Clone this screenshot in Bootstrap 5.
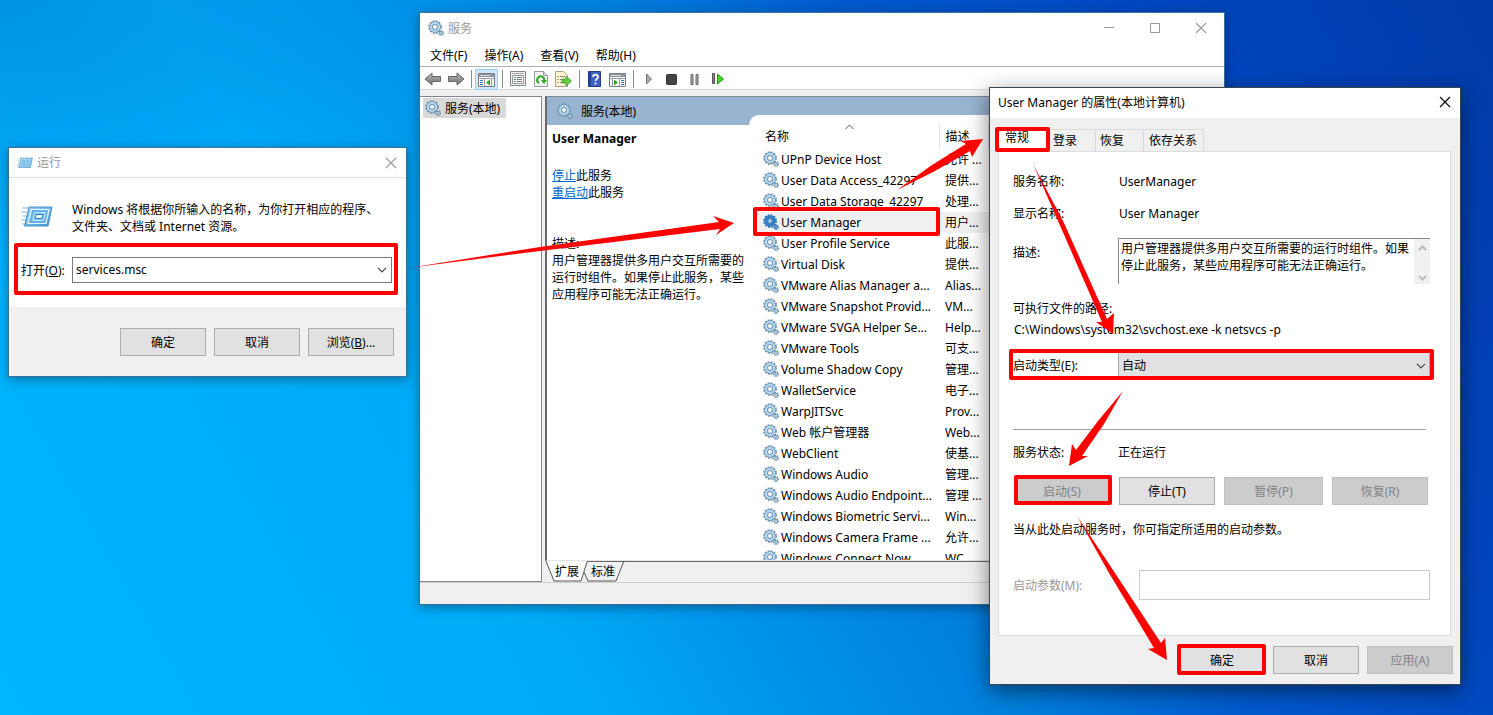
<!DOCTYPE html>
<html lang="zh-CN">
<head>
<meta charset="utf-8">
<meta name="viewport" content="width=device-width, initial-scale=1">
<title>服务</title>
<link href="https://cdn.jsdelivr.net/npm/bootstrap@5.3.0/dist/css/bootstrap.min.css" rel="stylesheet">
<style>
body{font-family:"Noto Sans","Noto Sans CJK SC",sans-serif;font-size:12px;line-height:17px;color:#000}
button,input,select,textarea{font:inherit;color:inherit;border-radius:0}
.desktop{min-height:100vh;background:
  radial-gradient(ellipse 420px 260px at 0 0,rgba(0,125,215,.55) 0,rgba(0,125,215,0) 100%),
  linear-gradient(60deg,#00b6ff 0,#00acf8 30%,#0092e8 43%,#007edb 54%,#0058cc 66%,#0046be 82%,#003aa8 100%)}
.win{position:absolute;border:1px solid #3a6f96;background:#fff;box-shadow:0 3px 10px rgba(0,0,0,.35)}
.win-run{left:8px;top:147px;width:399px}
.win-svc{left:419px;top:12px;width:806px;height:593px;background:#f0f0f0}
.win-prop{left:989px;top:87px;width:472px;border-color:#3c4650;background:#f0f0f0;box-shadow:0 6px 20px rgba(0,0,0,.5)}
.titlebar{height:30px;background:#fff}
.win-prop .titlebar{padding-bottom:2px}
.cap{border:0;background:none;padding:0;width:30px;height:28px;line-height:0}
.cap-wide{width:46px}
.inactive{color:#999}
.wbtn{width:86px;height:28px;padding:0;border:1px solid #adadad;background:#e1e1e1;white-space:nowrap}
.wbtn:disabled{background:#ccc;border-color:#bfbfbf;color:#838383}
.run-intro{padding:23px 12px 0 12px;gap:19px}
.run-open{padding:22px 14px 24px 12px}
.run-open label{width:51px}
.run-field{height:26px;border:1px solid #7a7a7a}
.run-field input{border:0;outline:0;min-width:0;padding:0 0 2px 3px}
.run-field button{border:0;background:none;width:18px;padding:0;line-height:0;color:#444}
.run-foot{background:#f0f0f0;height:69px;padding:21px 12px 0;gap:8px}
.menus{height:23px;background:#fff;padding:2px 0 0 2px;gap:1px}
.menus button{border:0;background:none;padding:0 8px}
.tools{height:24px;border-top:1px solid #b0b0b0;border-bottom:1px solid #d9d9d9;background:#fff;padding:2px 0 0 1px}
.tools button{width:23px;height:21px;border:0;padding:0;background:none;line-height:0}
.tools button.on{background:#cce8ff;border:1px solid #99d1ff}
.vsep{width:1px;height:18px;margin:0 3px 0 4px;background:#8c8c8c}
.workarea{padding-top:6px;gap:3px;min-height:0}
.tree{width:122px;border:1px solid #828790;border-left:0;background:#fff}
.tree-node{background:#d9d9d9;height:20px;width:83px;margin:1px 0 0 3px;padding-left:2px;gap:4px}
.pane{border-left:2px solid #696969;border-top:1px solid #828790;border-bottom:1px solid #e3e3e3;background:#fff;min-height:0}
.detail{width:202px}
.band{background:#99b4d1;height:28px;padding-left:10px;gap:8px}
.detail-body{padding:5px 4px 0 5px}
.detail-body h1{font-size:12px;line-height:17px;font-weight:700;margin:0}
.detail-body p{margin:20px 0 0}
.detail-body p+p{margin-top:34px}
.detail-body a{color:#0066cc}
.listwrap{background:#99b4d1;padding-top:18px;min-height:0}
.listbox{background:#fff;border-top-left-radius:10px;padding:8px 0 0 6px;overflow:hidden}
.svc{width:100%;table-layout:fixed;border-collapse:collapse}
.svc th{height:26px;font-weight:400;padding:0 6px 0 10px;border-right:1px solid #e5e5e5;position:relative}
.svc th+th{padding-left:6px}
.svc td{height:21px;padding:0 0 0 6px;white-space:nowrap;overflow:hidden}
.svc td:first-child{padding-left:8px}
.svc tr.sel td{background:#f0f0f0}
.svc .gear{margin-right:2px;vertical-align:-3px}
.sort{position:absolute;left:90px;top:1px}
.c-name{width:184px}.c-desc{width:49px}
.sheets{height:21px;position:relative;padding-left:4px}
.sheets svg{position:absolute;left:0;top:0}
.sheets .rule{height:1px;background:#696969;position:absolute;left:41px;right:0;top:0}
.sheets button{position:relative;border:0;background:none;padding:0;width:36px}
.statusbar{height:22px;border-top:1px solid #d0d0d0}
.ptabs{padding:9px 0 0 6px}
.ptabs button{border:1px solid #d9d9d9;border-bottom:0;background:#f0f0f0;width:48px;height:22px;padding:0 8px 0 4px;text-align:left}
.ptabs button+button+button{border-left:0}
.ptabs button.active{width:52px;height:24px;background:#fff;padding:0 0 4px 8px}
.ptabs button.wide{width:60px;padding:0 5px}
.sheet{margin:0 9px 10px 8px;border:1px solid #dcdcdc;background:#fff;padding:13px 20px 35px 14px}
.frow{height:32px}
.flabel{width:105px;flex:none}
.frow .flabel{width:106px}
.descrow{margin:9px 0 16px}
.descrow .flabel{padding-top:6px}
.descbox{height:46px;border:1px solid #828790;border-right:0;border-bottom:0}
.descbox textarea{border:0;resize:none;padding:1px 0 0 2px;overflow:hidden;outline:0;height:44px;min-width:0}
.fakebar{width:16px;background:#f0f0f0;padding:6px 0 3px}
.exepath{margin:4px 0 14px 1px}
.startup{height:27px;border:1px solid #adadad;background:#e1e1e1;appearance:none;padding:0 3px;width:100%}
.startup-wrap{position:relative;color:#444}
.startup-wrap select{color:#000}
.startup-wrap svg{position:absolute;right:4px;top:11px;pointer-events:none}
.divider{height:1px;background:#a0a0a0;margin:50px 4px 14px 0}
.acts{display:grid;grid-template-columns:96px 96px 99px 96px;gap:9px;margin:16px 0 16px 1px}
.acts .wbtn{width:auto}
.paramrow{margin-top:32px}
.param{width:291px;height:30px;border:1px solid #ccc;background:#fff}
.prop-foot{gap:8px;padding:0 7px 10px 0}
.marks{position:absolute;left:0;top:0;pointer-events:none}
</style>
</head>
<body>
<svg width="0" height="0" class="position-absolute" aria-hidden="true">
  <defs>
    <symbol id="gear" viewBox="0 0 16 16">
      <circle cx="7" cy="7" r="5.9" fill="none" stroke="#7391ab" stroke-width="2" stroke-dasharray="1.8 1.29"/>
      <circle cx="7" cy="7" r="4.1" fill="none" stroke="#7f9fb9" stroke-width="3.6"/>
      <circle cx="7" cy="7" r="4" fill="none" stroke="#b3d8ee" stroke-width="2.2"/>
      <circle cx="7" cy="7" r="2.4" fill="#fff" stroke="#6288a8" stroke-width=".8"/>
      <circle cx="13" cy="13" r="2.3" fill="none" stroke="#66889f" stroke-width="1.5" stroke-dasharray="1 .8"/>
      <circle cx="13" cy="13" r="1.4" fill="#e8f4fb" stroke="#7ba2be" stroke-width="1.1"/>
    </symbol>
    <symbol id="gearsel" viewBox="0 0 16 16">
      <circle cx="7" cy="7" r="5.9" fill="none" stroke="#2a6fae" stroke-width="2" stroke-dasharray="1.8 1.29"/>
      <circle cx="7" cy="7" r="4.1" fill="none" stroke="#2f7fc4" stroke-width="3.4"/>
      <circle cx="7" cy="7" r="2.2" fill="#b5d6f0" stroke="#1c5f9c" stroke-width=".7"/>
      <circle cx="13" cy="13" r="2" fill="#5a9fd6" stroke="#1c69b0" stroke-width="1.6" stroke-dasharray="1 .6"/>
    </symbol>
    <linearGradient id="rb" x1="0" y1="0" x2="1" y2="1"><stop offset="0" stop-color="#a5d6f5"/><stop offset="1" stop-color="#3b93d8"/></linearGradient>
    <symbol id="runicon" viewBox="0 0 32 24">
      <path d="M1 3h7M0 7h6M2 11h4M0 15h5M1 19h4" stroke="#a9d0ec" stroke-width="1.3"/>
      <path d="M8 2h23l-4 19H3.500z" fill="url(#rb)" stroke="#4a90c8"/>
      <path d="M10.500 4.500h17.500l-3 14H7z" fill="#62b2e8" stroke="#e4f4fe" stroke-width="1.2"/>
      <path d="M13.500 7.500h11l-1.800 8H11.500z" fill="#8ccdf4" stroke="#b8def5"/>
      <path d="M15 9.500h7l-.9 4h-7z" fill="#e8f6ff" stroke="#2d78ba"/>
    </symbol>
    <symbol id="x" viewBox="0 0 12 12"><path d="M1 1l10 10M11 1L1 11" stroke="currentColor" stroke-width="1.100" fill="none"/></symbol>
    <symbol id="down" viewBox="0 0 10 6"><path d="M1 .8l4 4 4-4" stroke="currentColor" stroke-width="1.200" fill="none"/></symbol>
    <linearGradient id="gr" x1="0" y1="0" x2="0" y2="1"><stop offset="0" stop-color="#bbb"/><stop offset="1" stop-color="#6e6e6e"/></linearGradient>
  </defs>
</svg>

<main class="desktop position-relative overflow-hidden">

  <section class="win win-svc d-flex flex-column" aria-label="服务">
    <header class="titlebar d-flex align-items-center flex-shrink-0 ps-2 inactive">
      <svg width="16" height="16" class="me-1"><use href="#gear"/></svg><span class="flex-grow-1">服务</span>
      <button class="cap cap-wide" aria-label="最小化"><svg width="10" height="10"><path d="M0 4.500h10" stroke="#999"/></svg></button>
      <button class="cap cap-wide" aria-label="最大化"><svg width="10" height="10"><path d="M.5.500h9v9h-9z" fill="none" stroke="#999"/></svg></button>
      <button class="cap cap-wide inactive" aria-label="关闭"><svg width="12" height="12"><use href="#x"/></svg></button>
    </header>
    <nav class="menus d-flex align-items-center flex-shrink-0">
      <button>文件(F)</button><button>操作(A)</button><button>查看(V)</button><button>帮助(H)</button>
    </nav>
    <div class="tools d-flex align-items-center flex-shrink-0" role="toolbar">
      <button aria-label="后退"><svg width="18" height="16"><path d="M1 8l7-6v3.500h8.500v5H8V14z" fill="url(#gr)" stroke="#666"/></svg></button>
      <button aria-label="前进"><svg width="18" height="16"><path d="M17 8l-7-6v3.500H1.500v5H10V14z" fill="url(#gr)" stroke="#666"/></svg></button>
      <i class="vsep"></i>
      <button class="on" aria-label="显示/隐藏控制台树"><svg width="17" height="15"><path d="M.5 1.500h16v13H.5z" fill="#fff" stroke="#7c8088"/><path d="M1 2h15v3H1z" fill="#8d929c"/><path d="M2 3.500h10" stroke="#d6d9df"/><path d="M1 6.500h15M6.500 6v8M13.500 6v8" stroke="#9aa0aa"/><path d="M2 8.500h3M2 10.500h3M2 12.500h3" stroke="#3c78b4"/><path d="M12 7.500v6L8 10.500z" fill="#2eaa1e"/></svg></button>
      <i class="vsep"></i>
      <button aria-label="属性"><svg width="16" height="16"><path d="M.5.500h15v14H.5z" fill="#eee" stroke="#85888c"/><path d="M2 2.500h12" stroke="#aaa"/><path d="M2.500 4.500h11v8h-11z" fill="#fff" stroke="#999"/><path d="M4 6.500h2M4 8.500h2M4 10.500h2" stroke="#4489bd"/><path d="M7 6.500h5M7 8.500h5M7 10.500h5" stroke="#777"/></svg></button>
      <button aria-label="刷新"><svg width="14" height="16"><path d="M.5.500h9l4 4v11H.5z" fill="#f5f5f5" stroke="#999"/><path d="M9.500.500v4h4" fill="#ddd" stroke="#999"/><path d="M5 12a3.500 3.500 0 1 1 5-2" fill="none" stroke="#2dac22" stroke-width="2"/><path d="M7 9h6l-3 4z" fill="#2dac22"/></svg></button>
      <button aria-label="导出列表"><svg width="17" height="16"><path d="M.5.500h8l4 4v11H.5z" fill="#fff4cf" stroke="#a9a286"/><path d="M2.500 5.500h1M2.500 8.500h1M2.500 11.500h1" stroke="#444"/><path d="M5 5.500h5M5 8.500h3M5 11.500h3" stroke="#888"/><path d="M7 8h4V5l5.500 5L11 15v-3H7z" fill="#62ca42" stroke="#389c25" stroke-width=".7"/></svg></button>
      <i class="vsep"></i>
      <button aria-label="帮助"><svg width="13" height="16"><path d="M.5.500h12v15H.5z" fill="#3f63c5" stroke="#243c8b"/><path d="M1 1h2v14H1z" fill="#253f99"/><path d="M5 6c0-3 5-3 5-.3 0 2-2.500 2.300-2.500 4.300M7.500 11.500v2" stroke="#fff" stroke-width="1.700" fill="none"/></svg></button>
      <button aria-label="显示/隐藏操作窗格"><svg width="17" height="15"><path d="M.5 1.500h16v13H.5z" fill="#fff" stroke="#7c8088"/><path d="M1 2h15v3H1z" fill="#8d929c"/><path d="M2 3.500h10" stroke="#d6d9df"/><path d="M1 6.500h15M3.500 6v8M10.500 6v8" stroke="#9aa0aa"/><path d="M12 8.500h3M12 10.500h3M12 12.500h3" stroke="#3c78b4"/><path d="M5 7.500v6l4-3z" fill="#2eaa1e"/></svg></button>
      <i class="vsep"></i>
      <button aria-label="启动服务"><svg width="8" height="12"><path d="M1.500 1v10l5-5z" fill="#aaa" stroke="#777"/></svg></button>
      <button aria-label="停止服务"><svg width="11" height="11"><rect x=".5" y=".5" width="10" height="10" rx="1" fill="#444" stroke="#333"/></svg></button>
      <button aria-label="暂停服务"><svg width="9" height="11"><path d="M1 .5h2v10H1zM6 .5h2v10H6z" fill="#aaa" stroke="#666"/></svg></button>
      <button aria-label="重启动服务"><svg width="12" height="12"><path d="M.5.500h2v10h-2z" fill="#888" stroke="#555"/><path d="M5.500 1v10l6-5z" fill="#46d32c" stroke="#219c17"/></svg></button>
    </div>
    <div class="workarea d-flex flex-grow-1">
      <aside class="tree flex-shrink-0">
        <div class="tree-node d-flex align-items-center"><svg width="16" height="16" class="flex-shrink-0"><use href="#gear"/></svg><span class="text-nowrap">服务(本地)</span></div>
      </aside>
      <div class="d-flex flex-column flex-grow-1">
        <div class="pane d-flex flex-grow-1">
          <div class="detail flex-shrink-0">
            <div class="band d-flex align-items-center"><svg width="16" height="16"><use href="#gear"/></svg><span>服务(本地)</span></div>
            <div class="detail-body">
              <h1>User Manager</h1>
              <p><a href="#">停止</a>此服务<br><a href="#">重启动</a>此服务</p>
              <p>描述:<br>用户管理器提供多用户交互所需要的运行时组件。如果停止此服务，某些应用程序可能无法正确运行。</p>
            </div>
          </div>
          <div class="listwrap flex-grow-1 d-flex">
            <div class="listbox flex-grow-1">
              <table class="svc">
                <colgroup><col class="c-name"><col class="c-desc"><col></colgroup>
                <thead><tr><th>名称<svg class="sort" width="9" height="6"><path d="M.5 5l4-4 4 4" fill="none" stroke="#555"/></svg></th><th>描述</th><th></th></tr></thead>
                <tbody id="rows"></tbody>
              </table>
            </div>
          </div>
        </div>
        <div class="sheets d-flex align-items-center flex-shrink-0">
          <span class="rule"></span>
          <svg width="84" height="21"><path d="M1 0l8 20h27l6-20z" fill="#fff"/><path d="M1 0l8 20h27l6-19M39 11l4 9h28l8-20" fill="none" stroke="#555"/></svg>
          <button>扩展</button><button>标准</button>
        </div>
      </div>
    </div>
    <footer class="statusbar flex-shrink-0"></footer>
  </section>

  <section class="win win-run" aria-label="运行">
    <header class="titlebar d-flex align-items-center ps-2 inactive border-bottom">
      <svg width="16" height="12" class="me-1"><use href="#runicon"/></svg><span class="flex-grow-1">运行</span>
      <button class="cap inactive" aria-label="关闭"><svg width="12" height="12"><use href="#x"/></svg></button>
    </header>
    <form onsubmit="return false">
      <div class="run-intro d-flex">
        <svg width="32" height="24" class="flex-shrink-0 mt-1"><use href="#runicon"/></svg>
        <p class="mb-0">Windows 将根据你所输入的名称，为你打开相应的程序、<br>文件夹、文档或 Internet 资源。</p>
      </div>
      <div class="run-open d-flex align-items-center">
        <label for="open">打开(<u>O</u>):</label>
        <div class="run-field d-flex flex-grow-1"><input id="open" class="flex-grow-1" type="text" value="services.msc"><button type="button" aria-label="展开"><svg width="10" height="6"><use href="#down"/></svg></button></div>
      </div>
      <div class="run-foot d-flex justify-content-end">
        <button class="wbtn">确定</button><button class="wbtn">取消</button><button class="wbtn">浏览(<u>B</u>)...</button>
      </div>
    </form>
  </section>

  <section class="win win-prop" aria-label="User Manager 的属性">
    <header class="titlebar d-flex align-items-center ps-2">
      <span class="flex-grow-1">User Manager 的属性(本地计算机)</span>
      <button class="cap" aria-label="关闭"><svg width="12" height="12"><use href="#x"/></svg></button>
    </header>
    <div class="ptabs d-flex align-items-end" role="tablist">
      <button class="active" role="tab">常规</button><button role="tab">登录</button><button role="tab">恢复</button><button class="wide" role="tab">依存关系</button>
    </div>
    <form onsubmit="return false">
      <div class="sheet">
        <div class="frow d-flex align-items-center"><span class="flabel">服务名称:</span><span>UserManager</span></div>
        <div class="frow d-flex align-items-center"><span class="flabel">显示名称:</span><span>User Manager</span></div>
        <div class="descrow d-flex">
          <label class="flabel" for="desc">描述:</label>
          <div class="descbox d-flex flex-grow-1"><textarea id="desc" class="flex-grow-1" readonly>用户管理器提供多用户交互所需要的运行时组件。如果停止此服务，某些应用程序可能无法正确运行。</textarea>
            <span class="fakebar d-flex flex-column justify-content-between align-items-center"><svg width="9" height="6"><path d="M1 5l3.500-3.500L8 5" fill="none" stroke="#bbb" stroke-width="2"/></svg><svg width="9" height="6"><path d="M1 1l3.500 3.500L8 1" fill="none" stroke="#bbb" stroke-width="2"/></svg></span>
          </div>
        </div>
        <div>可执行文件的路径:</div>
        <div class="exepath">C:\Windows\system32\svchost.exe -k netsvcs -p</div>
        <div class="d-flex align-items-center"><label class="flabel" for="stype">启动类型(E):</label>
          <div class="startup-wrap flex-grow-1"><select id="stype" class="startup"><option>自动</option></select><svg width="10" height="6"><use href="#down"/></svg></div></div>
        <div class="divider"></div>
        <div class="d-flex"><span class="flabel">服务状态:</span><span>正在运行</span></div>
        <div class="acts"><button class="wbtn" disabled>启动(S)</button><button class="wbtn">停止(T)</button><button class="wbtn" disabled>暂停(P)</button><button class="wbtn" disabled>恢复(R)</button></div>
        <div>当从此处启动服务时，你可指定所适用的启动参数。</div>
        <div class="paramrow d-flex align-items-center justify-content-between"><label for="param" class="inactive">启动参数(M):</label><input id="param" class="param" type="text" disabled></div>
      </div>
      <div class="prop-foot d-flex justify-content-end">
        <button class="wbtn">确定</button><button class="wbtn">取消</button><button class="wbtn" disabled>应用(A)</button>
      </div>
    </form>
  </section>

  <svg class="marks" width="1493" height="715" aria-hidden="true">
    <g fill="none" stroke="#f00" stroke-width="4" stroke-linejoin="round">
      <rect x="16" y="245" width="380" height="48"/>
      <rect x="755" y="209" width="183" height="25"/>
      <rect x="997" y="129" width="51" height="21"/>
      <rect x="1011" y="351" width="421" height="27"/>
      <rect x="1016" y="477" width="94" height="26"/>
      <rect x="1179" y="646" width="85" height="27"/>
    </g>
    <g fill="#f00">
      <path d="M408 268L540 247 719 222 713 216 734 223 716 235 720 229 540 251z"/>
      <path d="M897 190L932 165 966 144 961 141 983 139 972 157 970 151 935 171z"/>
      <path d="M1033 164L1064 223 1107 319 1114 313 1113 334 1096 322 1102 322 1062 230z"/>
      <path d="M1123 391L1104 424 1082 456 1088 456 1069 466 1072 444 1076 450 1098 421z"/>
      <path d="M1077 516L1111 567 1161 643 1165 638 1167 660 1148 649 1154 648 1109 573z"/>
    </g>
  </svg>
</main>
<script>
const services = [
  ["UPnP Device Host","允许 ..."],["User Data Access_42297","提供..."],["User Data Storage_42297","处理..."],
  ["User Manager","用户..."],["User Profile Service","此服..."],["Virtual Disk","提供..."],
  ["VMware Alias Manager a...","Alias..."],["VMware Snapshot Provid...","VM..."],["VMware SVGA Helper Se...","Help..."],
  ["VMware Tools","可支..."],["Volume Shadow Copy","管理..."],["WalletService","电子..."],["WarpJITSvc","Prov..."],
  ["Web 帐户管理器","Web..."],["WebClient","使基..."],["Windows Audio","管理..."],["Windows Audio Endpoint...","管理 ..."],
  ["Windows Biometric Servi...","Win..."],["Windows Camera Frame ...","允许..."],["Windows Connect Now...","WC..."]
];
document.getElementById("rows").innerHTML = services.map(([name, desc]) => {
  const sel = name === "User Manager";
  return `<tr class="${sel ? "sel" : ""}"><td><svg class="gear" width="16" height="16"><use href="#${sel ? "gearsel" : "gear"}"/></svg>${name}</td><td>${desc}</td><td></td></tr>`;
}).join("");
</script>
<script src="https://cdn.jsdelivr.net/npm/bootstrap@5.3.0/dist/js/bootstrap.bundle.min.js"></script>
</body>
</html>
